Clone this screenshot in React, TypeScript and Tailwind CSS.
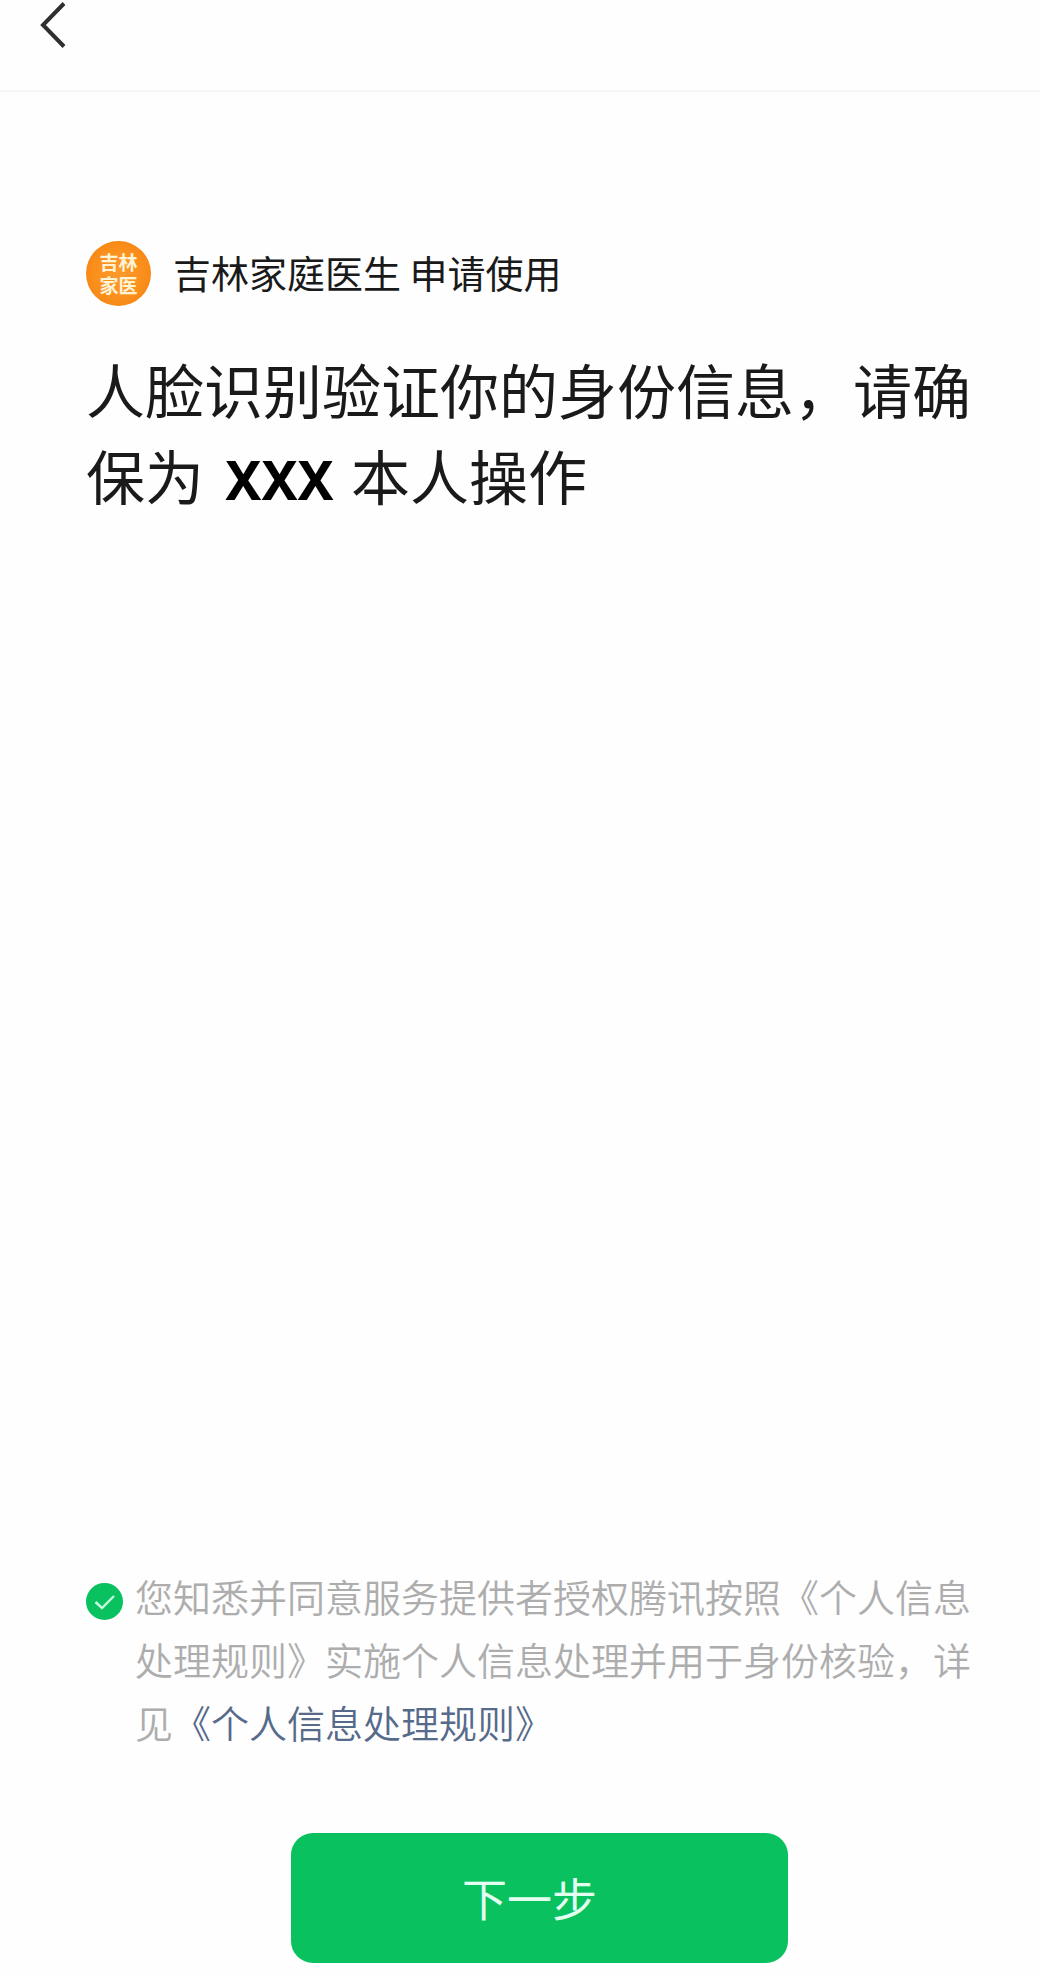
import { useState } from "react";

const APP_NAME = "吉林家庭医生";
const USER_NAME = "XXX";

{/*ICONS*/}
function BackIcon() {
  return (
    <svg width="28" height="48" viewBox="0 0 28 48" fill="none" aria-hidden="true">
      <path d="M24 3.500 L3 25 L24 46.500" stroke="#2f2f2f" strokeWidth="4" />
    </svg>
  );
}

function CheckIcon() {
  return (
    <svg
      viewBox="0 0 37 37"
      fill="none"
      aria-hidden="true"
      className="pointer-events-none absolute inset-0 h-full w-full"
    >
      <path d="M9.500 19 L16 25 L28 13" stroke="#c4f8da" strokeWidth="2.4" />
    </svg>
  );
}

function AppLogo() {
  return (
    <div className="flex size-[65px] shrink-0 flex-col items-center justify-center rounded-full bg-[radial-gradient(circle,#fd9a2c_0%,#fb8f1c_55%,#ef7c0c_100%)] pb-0.5 text-[19px] leading-[23px] font-bold text-[#fff3d6]">
      <span>吉林</span>
      <span>家医</span>
    </div>
  );
}

{/*PAGE*/}
export default function App() {
  const [agreed, setAgreed] = useState(true);

  return (
    <div className="flex min-h-screen flex-col bg-[#fefefe] font-['Noto_Sans_CJK_SC',sans-serif] text-[#1a1a1a]">
      {/* TOP BAR */}
      <header className="flex h-[92px] shrink-0 items-start border-b-2 border-[#f7f7f7] pl-10">
        <button type="button" aria-label="返回">
          <BackIcon />
        </button>
      </header>

      <main className="flex flex-1 flex-col pt-[149px] pr-[66px] pb-3 pl-[86px]">
        {/* APPLICANT */}
        <div className="flex items-start gap-[22px]">
          <AppLogo />
          <p className="text-[38px] leading-[62px]">{APP_NAME} 申请使用</p>
        </div>

        <h1 className="mt-10 text-[59px] leading-[86px] font-normal">
          人脸识别验证你的身份信息，请确保为{" "}
          <strong className="mr-1 ml-2 font-['Noto_Sans',sans-serif] text-[54px] leading-none font-bold text-black">
            {USER_NAME}
          </strong>{" "}
          本人操作
        </h1>

        {/* AGREEMENT */}
        <div className="mt-auto flex items-start gap-3">
          <div className="relative mt-[19px] size-[37px] shrink-0">
            <input
              id="agree"
              type="checkbox"
              checked={agreed}
              onChange={(e) => setAgreed(e.target.checked)}
              className="block size-full appearance-none rounded-full border-2 border-[#b2b2b2] checked:border-[#0ac160] checked:bg-[#0ac160]"
            />
            {agreed && <CheckIcon />}
          </div>
          <p className="text-[38px] leading-[63px] font-[350] text-[#adadad]">
            <label htmlFor="agree">
              您知悉并同意服务提供者授权腾讯按照《个人信息处理规则》实施个人信息处理并用于身份核验，详见
            </label>
            <a href="#rules" className="text-[#566a8a]">
              《个人信息处理规则》
            </a>
          </p>
        </div>

        <button
          type="button"
          disabled={!agreed}
          className="mt-20 ml-[205px] h-[130px] w-[497px] rounded-[22px] bg-[#0ac160] pr-5 text-[45px] text-[#e2fff0] disabled:opacity-50"
        >
          下一步
        </button>
      </main>
    </div>
  );
}
